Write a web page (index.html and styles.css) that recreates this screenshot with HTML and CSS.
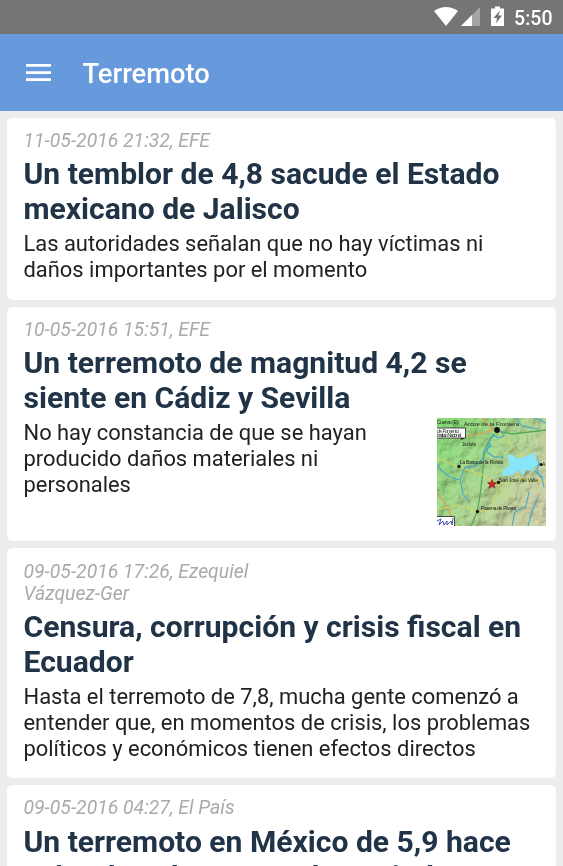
FILE: index.html
```html
<!DOCTYPE html>
<html lang="es">
<head>
<meta charset="utf-8">
<title>Terremoto</title>
<link rel="stylesheet" href="styles.css">
</head>
<body>
<div class="status">
  <svg class="status-icons" viewBox="0 0 72 24" width="72" height="24">
    <path fill="#fff" d="M0 6Q12 -2 24 6L12 21Z"/>
    <path fill="#a5a5a5" d="M46 2V21H27Z"/>
    <path fill="#fff" d="M38 10V21H27Z"/>
    <path fill="#fff" fill-rule="evenodd" d="M61 1.500h5v2h4v17.500h-13v-17.500h4ZM66 5.500l-6.500 7.500h3.500l-1 5.500l6-8h-3.500Z"/>
  </svg>
  <span class="clock">5:50</span>
</div>
<header class="toolbar">
  <svg class="menu" viewBox="0 0 25 17" width="25" height="17"><path fill="#fff" d="M0 0h25v2.700H0zM0 7.200h25v2.700H0zM0 14.300h25v2.700H0z"/></svg>
  <h1>Terremoto</h1>
</header>
<main class="list">
  <article class="card first">
    <p class="meta">11-05-2016 21:32, EFE</p>
    <h2>Un temblor de 4,8 sacude el Estado<br>mexicano de Jalisco</h2>
    <p class="summary">Las autoridades señalan que no hay víctimas ni<br>daños importantes por el momento</p>
  </article>
  <article class="card second">
    <p class="meta">10-05-2016 15:51, EFE</p>
    <h2>Un terremoto de magnitud 4,2 se<br>siente en Cádiz y Sevilla</h2>
    <div class="row">
      <p class="summary">No hay constancia de que se hayan<br>producido daños materiales ni<br>personales</p>
      <svg class="map" viewBox="0 0 109 108" width="109" height="108">
        <defs>
          <linearGradient id="land" x1="0" y1="0" x2="1" y2=".6"><stop stop-color="#86df77"/><stop offset=".45" stop-color="#a8de90"/><stop offset="1" stop-color="#d2d6aa"/></linearGradient>
          <filter id="relief" x="0" y="0" width="1" height="1"><feTurbulence type="fractalNoise" baseFrequency=".055" numOctaves="4" seed="8"/><feDiffuseLighting surfaceScale="7" lighting-color="#fff"><feDistantLight azimuth="225" elevation="52"/></feDiffuseLighting></filter>
        </defs>
        <rect width="109" height="108" fill="url(#land)"/>
        <rect class="relief" width="109" height="108" filter="url(#relief)"/>
        <g fill="none" stroke-linecap="round" stroke-linejoin="round">
          <path stroke="#53a95a" stroke-width="1.300" d="M57 16Q49 24 47 39L45 61Q43 80 40 94L34 108M60 13L75 16L109 12"/>
          <path stroke="#e69c50" stroke-width="1.200" d="M0 18Q12 14 22 19Q36 18 56 12L45 0M0 77Q8 83 12 93L18 108"/>
          <path stroke="#d9d65d" stroke-width="1" d="M0 40L22 49L46 57L62 66L85 61L109 64M62 14L84 37L109 49M0 92L20 87L41 94L55 91L62 66L71 82"/>
          <path stroke="#45a8c9" stroke-width="1.100" d="M64 13L67 18L61 20L56 17L52 24L54 28L47 33L45 42L37 49L28 49L23 62L13 59L5 53L0 47M23 62L26 76L32 84M52 26L50 34L57 39L66 39M79 0L85 8L101 11M109 5L98 0M92 74L89 88L78 94L75 108M101 79L95 94L91 108M98 53L105 60L107 69"/>
        </g>
        <path fill="#88e6fa" d="M70 37L76 37L80 41L89 38L99 35L98 40L102 45L94 53L89 52L86 57L82 52L75 57L65 58L67 51L73 47Z"/>
        <path fill="none" stroke="#55b2cf" stroke-width="1.600" d="M102 44L100 54L106 60"/>
        <g fill="#111"><circle cx="60" cy="12" r="2.900"/><circle cx="25" cy="20" r="1.600"/><circle cx="22" cy="48.500" r="1.700"/><circle cx="61.500" cy="64.500" r="1.700"/><circle cx="40.500" cy="93.500" r="1.700"/><circle cx="104" cy="46.500" r="1.600"/></g>
        <path fill="#e32226" stroke="#711" stroke-width=".6" d="M55 61.500L56.200 64.700H59.500L56.900 66.700L57.900 70L55 68L52.100 70L53.100 66.700L50.500 64.700H53.800Z"/>
        <g class="places"><text x="27" y="7.500" textLength="55" font-size="6">Arcos de la Frontera</text><text x="0" y="6" textLength="22">Cuervo (El)</text><text x="25" y="28" textLength="14">Jédula</text><text x="23" y="46" textLength="43">La Barca de la Florida</text><text x="62" y="64" textLength="39">San José del Valle</text><text x="44" y="92" textLength="35">Paterna de Rivera</text><text x="105" y="48">A</text></g>
        <path fill="#fff" stroke="#222" stroke-width=".8" d="M-1 10H28.500V20H-1ZM-1 98.500H17.500V109H-1Z"/>
        <g class="places"><text x="0" y="14.500" textLength="22">de Fomento</text><text x="0" y="19" textLength="24">Instituto Nacional</text></g>
        <path fill="none" stroke="#444cac" stroke-width="1" d="M0 103L4 101L2 107L6 103L7 107L10 103V107L14 103L15 107L16 100"/>
      </svg>
    </div>
  </article>
  <article class="card third">
    <p class="meta">09-05-2016 17:26, Ezequiel<br>Vázquez-Ger</p>
    <h2>Censura, corrupción y crisis fiscal en<br>Ecuador</h2>
    <p class="summary">Hasta el terremoto de 7,8, mucha gente comenzó a<br>entender que, en momentos de crisis, los problemas<br>políticos y económicos tienen efectos directos</p>
  </article>
  <article class="card fourth">
    <p class="meta">09-05-2016 04:27, El País</p>
    <h2>Un terremoto en México de 5,9 hace<br>saltar las alarmas en la capital</h2>
  </article>
</main>
</body>
</html>
```
FILE: styles.css
```css
* { box-sizing: border-box; }
body { margin: 0; height: 866px; overflow: hidden; background: #ededed; font-family: Roboto, sans-serif; }
h1, h2, p { margin: 0; }
.status { height: 34.4px; background: #757575; display: flex; align-items: center; justify-content: flex-end; padding-right: 10.5px; color: #fff; }
.status-icons { margin: 0 8px 0 0; }
.clock { font-size: 19.5px; font-weight: 500; line-height: 32px; padding-top: 3px; }
.toolbar { height: 76.6px; background: #6799dd; color: #fff; display: flex; align-items: center; padding-left: 26px; }
.menu { margin-right: 31.500px; }
h1 { font-size: 27.3px; font-weight: 500; line-height: 32px; padding-top: 2px; }
.list { display: flex; flex-direction: column; gap: 7px; padding: 7px; }
.card { flex: none; background: #fff; border-radius: 5px; padding: 12.200px 10px 0 16.500px; white-space: nowrap; box-shadow: 0 0 1px rgba(0, 0, 0, .08); }
.first { height: 182px; }
.second { height: 234.4px; }
.third { height: 229.8px; }
.fourth { height: 200px; }
.meta { font-size: 19.360px; line-height: 22px; font-style: italic; color: #aaa; }
h2 { font-size: 30.08px; line-height: 35px; font-weight: 700; color: #203347; margin-top: 4.300px; }
.summary { font-size: 21.920px; line-height: 25.900px; color: #212121; margin-top: 5px; }
.row { display: flex; justify-content: space-between; }
.map { margin-top: 2.500px; flex: none; }
.relief { mix-blend-mode: multiply; opacity: .42; }
.places { font-family: "Liberation Sans", sans-serif; font-size: 5px; fill: #162016; }
```
